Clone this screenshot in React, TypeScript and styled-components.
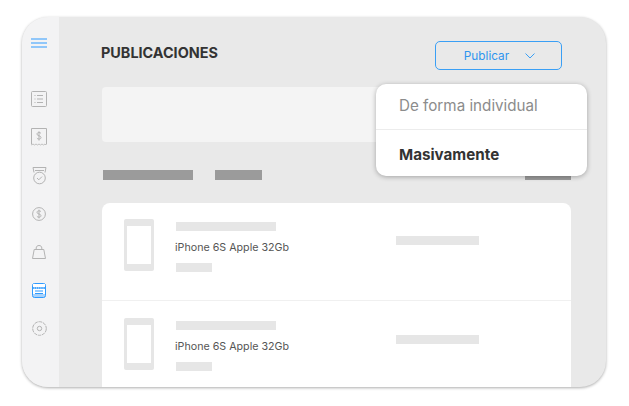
import React from 'react';
import styled, { createGlobalStyle } from 'styled-components';

const GlobalStyle = createGlobalStyle`
  html, body {
    margin: 0;
    background: #fff;
    font-family: "Inter", "Open Sans", sans-serif;
  }
`;

const Page = styled.div`
  width: 629px;
  height: 406px;
  box-sizing: border-box;
  padding: 17px 23px 19px 22px;
  overflow: hidden;
`;

const Frame = styled.div`
  position: relative;
  display: flex;
  height: 100%;
  border-radius: 26px;
  background: #e9e9e9;
  box-shadow: 0 1px 3px rgba(0, 0, 0, 0.32);
`;

const Sidebar = styled.nav`
  flex: 0 0 37px;
  box-sizing: border-box;
  display: flex;
  flex-direction: column;
  align-items: center;
  padding: 16px 3px 0 0;
  background: #f3f3f4;
  border-radius: 26px 0 0 26px;
`;

const MenuSlot = styled.div`
  height: 20px;
  margin-bottom: 34px;
  display: flex;
  align-items: center;
`;

const NavList = styled.div`
  display: flex;
  flex-direction: column;
  gap: 14.3px;
`;

const NavSlot = styled.div`
  width: 24px;
  height: 24px;
  display: flex;
  align-items: center;
  justify-content: center;
`;

const Main = styled.main`
  flex: 1;
  min-width: 0;
  display: flex;
  flex-direction: column;
  padding: 24px 35px 0 43px;
  overflow: hidden;
  border-radius: 0 26px 26px 0;
`;

const Header = styled.header`
  flex-shrink: 0;
  display: flex;
  align-items: center;
  justify-content: space-between;
  height: 29px;
  padding-right: 9px;
`;

const Title = styled.h1`
  margin: -7px 0 0 -1px;
  font-size: 14.4px;
  font-weight: 700;
  color: #333;
`;

const PublishButton = styled.div`
  box-sizing: border-box;
  width: 127px;
  height: 29px;
  display: flex;
  align-items: center;
  justify-content: center;
  gap: 16px;
  padding: 0 0 0 2px;
  border: 1px solid #3a9ff5;
  border-radius: 5px;
  color: #2f95ee;
  font-size: 11.8px;
`;

const SearchPanel = styled.div`
  flex-shrink: 0;
  height: 55px;
  margin-top: 17px;
  border-radius: 4px;
  background: #f4f4f4;
`;

const FilterRow = styled.div`
  flex-shrink: 0;
  display: flex;
  margin-top: 28px;
  padding: 0 0 0 1px;
`;

const FilterBar = styled.div<{ $width: number; $gap?: number }>`
  width: ${(p) => p.$width}px;
  height: 10px;
  margin-right: ${(p) => p.$gap ?? 0}px;
  background: #9b9b9b;
`;

const Spacer = styled.div`
  flex: 1;
`;

const ProductCard = styled.section`
  flex: 1 0 auto;
  margin-top: 23px;
  border-radius: 8px 8px 0 0;
  background: #fff;
`;

const ProductRow = styled.div`
  display: flex;
  height: 98px;
  box-sizing: border-box;
  padding: 16px 0 0 22px;
  border-bottom: 1px solid #f0f0f0;

  &:last-child {
    border-bottom: none;
    padding-top: 17px;
  }
`;

const Phone = styled.div`
  box-sizing: border-box;
  width: 30px;
  height: 52px;
  padding: 7px 3px 7px;
  border-radius: 2px;
  background: #e6e6e6;
`;

const PhoneScreen = styled.div`
  height: 100%;
  background: #fff;
`;

const ProductInfo = styled.div`
  width: 220px;
  margin-left: 22px;
  padding-top: 3px;
`;

const Placeholder = styled.div<{ $width: number }>`
  width: ${(p) => p.$width}px;
  height: 9px;
  background: #e6e6e6;
`;

const ProductName = styled.div`
  height: 14px;
  margin: 10px 0 8px -1px;
  font-size: 10.7px;
  line-height: 14px;
  color: #555;
`;

const ProductSide = styled.div`
  padding-top: 17px;
`;

const Dropdown = styled.div`
  position: absolute;
  left: 354px;
  top: 67px;
  width: 211px;
  height: 92px;
  display: flex;
  flex-direction: column;
  border-radius: 10px;
  background: #fff;
  box-shadow: 0 1px 5px rgba(0, 0, 0, 0.3);
`;

const DropdownItem = styled.div<{ $strong?: boolean }>`
  box-sizing: border-box;
  flex: ${(p) => (p.$strong ? '1' : '0 0 46px')};
  display: flex;
  align-items: center;
  padding: ${(p) => (p.$strong ? '2px 23px 0' : '0 23px 2px')};
  font-size: 15.2px;
  font-weight: ${(p) => (p.$strong ? 700 : 400)};
  color: ${(p) => (p.$strong ? '#333' : '#8c8c8c')};
  border-bottom: ${(p) => (p.$strong ? 'none' : '1px solid #ececec')};
`;

const Icon = styled.svg<{ $active?: boolean }>`
  display: block;
  fill: none;
  stroke: ${(p) => (p.$active ? '#2f9bff' : '#b3b3b3')};
  stroke-width: 1;
`;

const Hamburger = () => (
  <Icon $active width="16" height="10" viewBox="0 0 16 10">
    <path d="M0 1h16M0 5h16M0 9h16" />
  </Icon>
);

const ListIcon = () => (
  <Icon width="16" height="16" viewBox="0 0 16 16">
    <rect x="0.5" y="0.5" width="15" height="15" rx="1" />
    <path d="M6 4.5h6M6 8h6M6 11.5h6M3.5 4.5h1M3.5 8h1M3.5 11.5h1" />
  </Icon>
);

const ReceiptIcon = () => (
  <Icon width="16" height="18" viewBox="0 0 16 18">
    <path d="M0.5 16.5V0.5h15v16" />
    <path d="M0.5 17l1.5-1 1.5 1 1.5-1 1.5 1 1.5-1 1.5 1 1.5-1 1.5 1 1.5-1 1 1" strokeWidth="0.8" />
    <path d="M10 5.5C9.5 4.8 9 4.5 8 4.5c-1.2 0-2 .6-2 1.6 0 2.2 4 1.2 4 3.4 0 1-.8 1.6-2 1.6-1 0-1.6-.4-2.1-1.1M8 3.3v9.3" />
  </Icon>
);

const BadgeIcon = () => (
  <Icon width="15" height="18" viewBox="0 0 15 18">
    <path d="M2 5.5L1 0.5h13l-1 5" />
    <path d="M3 3.5h9" />
    <circle cx="7.5" cy="11" r="5.8" />
    <path d="M5 11l1.8 1.8 3.2-3.2" />
  </Icon>
);

const CoinIcon = () => (
  <Icon width="14" height="14" viewBox="0 0 14 14">
    <circle cx="7" cy="7" r="6.4" />
    <path d="M9 4.8C8.6 4.1 8 3.8 7 3.8c-1.2 0-2 .6-2 1.5 0 2.2 4 1.3 4 3.4 0 .9-.8 1.5-2 1.5-1 0-1.6-.3-2.1-1M7 2.6v8.8" />
  </Icon>
);

const BagIcon = () => (
  <Icon width="14" height="14" viewBox="0 0 14 14">
    <path d="M2.2 4.5h9.6l1.7 9H0.5z" />
    <path d="M4.2 4.5V3C4.2 1.4 5.4 0.5 7 0.5s2.8 0.9 2.8 2.5v1.5" />
  </Icon>
);

const StoreIcon = () => (
  <Icon $active width="14" height="15" viewBox="0 0 14 15">
    <rect x="0.5" y="0.5" width="13" height="14" rx="2" fill="#a9d3fb" />
    <rect x="1" y="1" width="12" height="3" fill="#fff" stroke="none" />
    <rect x="1" y="6" width="12" height="5" fill="#fff" stroke="none" />
    <path d="M0.5 5h13" strokeDasharray="1.4 0.8" strokeWidth="1.6" />
    <path d="M3 8h8M3 10.5h8" />
  </Icon>
);

const GearIcon = () => (
  <Icon width="15" height="15" viewBox="0 0 15 15">
    <circle cx="7.5" cy="7.5" r="6.8" strokeDasharray="3.6 0.8" />
    <circle cx="7.5" cy="7.5" r="2.2" />
  </Icon>
);

const navIcons = [ListIcon, ReceiptIcon, BadgeIcon, CoinIcon, BagIcon, StoreIcon, GearIcon];

const Product = () => (
  <ProductRow>
    <Phone>
      <PhoneScreen />
    </Phone>
    <ProductInfo>
      <Placeholder $width={100} />
      <ProductName>iPhone 6S Apple 32Gb</ProductName>
      <Placeholder $width={36} />
    </ProductInfo>
    <ProductSide>
      <Placeholder $width={83} />
    </ProductSide>
  </ProductRow>
);

const App = () => (
  <Page>
    <GlobalStyle />
    <Frame>
      <Sidebar>
        <MenuSlot>
          <Hamburger />
        </MenuSlot>
        <NavList>
          {navIcons.map((NavIcon, i) => (
            <NavSlot key={i}>
              <NavIcon />
            </NavSlot>
          ))}
        </NavList>
      </Sidebar>
      <Main>
        <Header>
          <Title>PUBLICACIONES</Title>
          <PublishButton>
            Publicar
            <svg width="10" height="6" viewBox="0 0 10 6" fill="none" stroke="#3a9ff5">
              <path d="M0.5 0.5L5 5l4.5-4.5" />
            </svg>
          </PublishButton>
        </Header>
        <SearchPanel />
        <FilterRow>
          <FilterBar $width={90} $gap={22} />
          <FilterBar $width={47} />
          <Spacer />
          <FilterBar $width={46} />
        </FilterRow>
        <ProductCard>
          <Product />
          <Product />
        </ProductCard>
      </Main>
      <Dropdown>
        <DropdownItem>De forma individual</DropdownItem>
        <DropdownItem $strong>Masivamente</DropdownItem>
      </Dropdown>
    </Frame>
  </Page>
);

export default App;
